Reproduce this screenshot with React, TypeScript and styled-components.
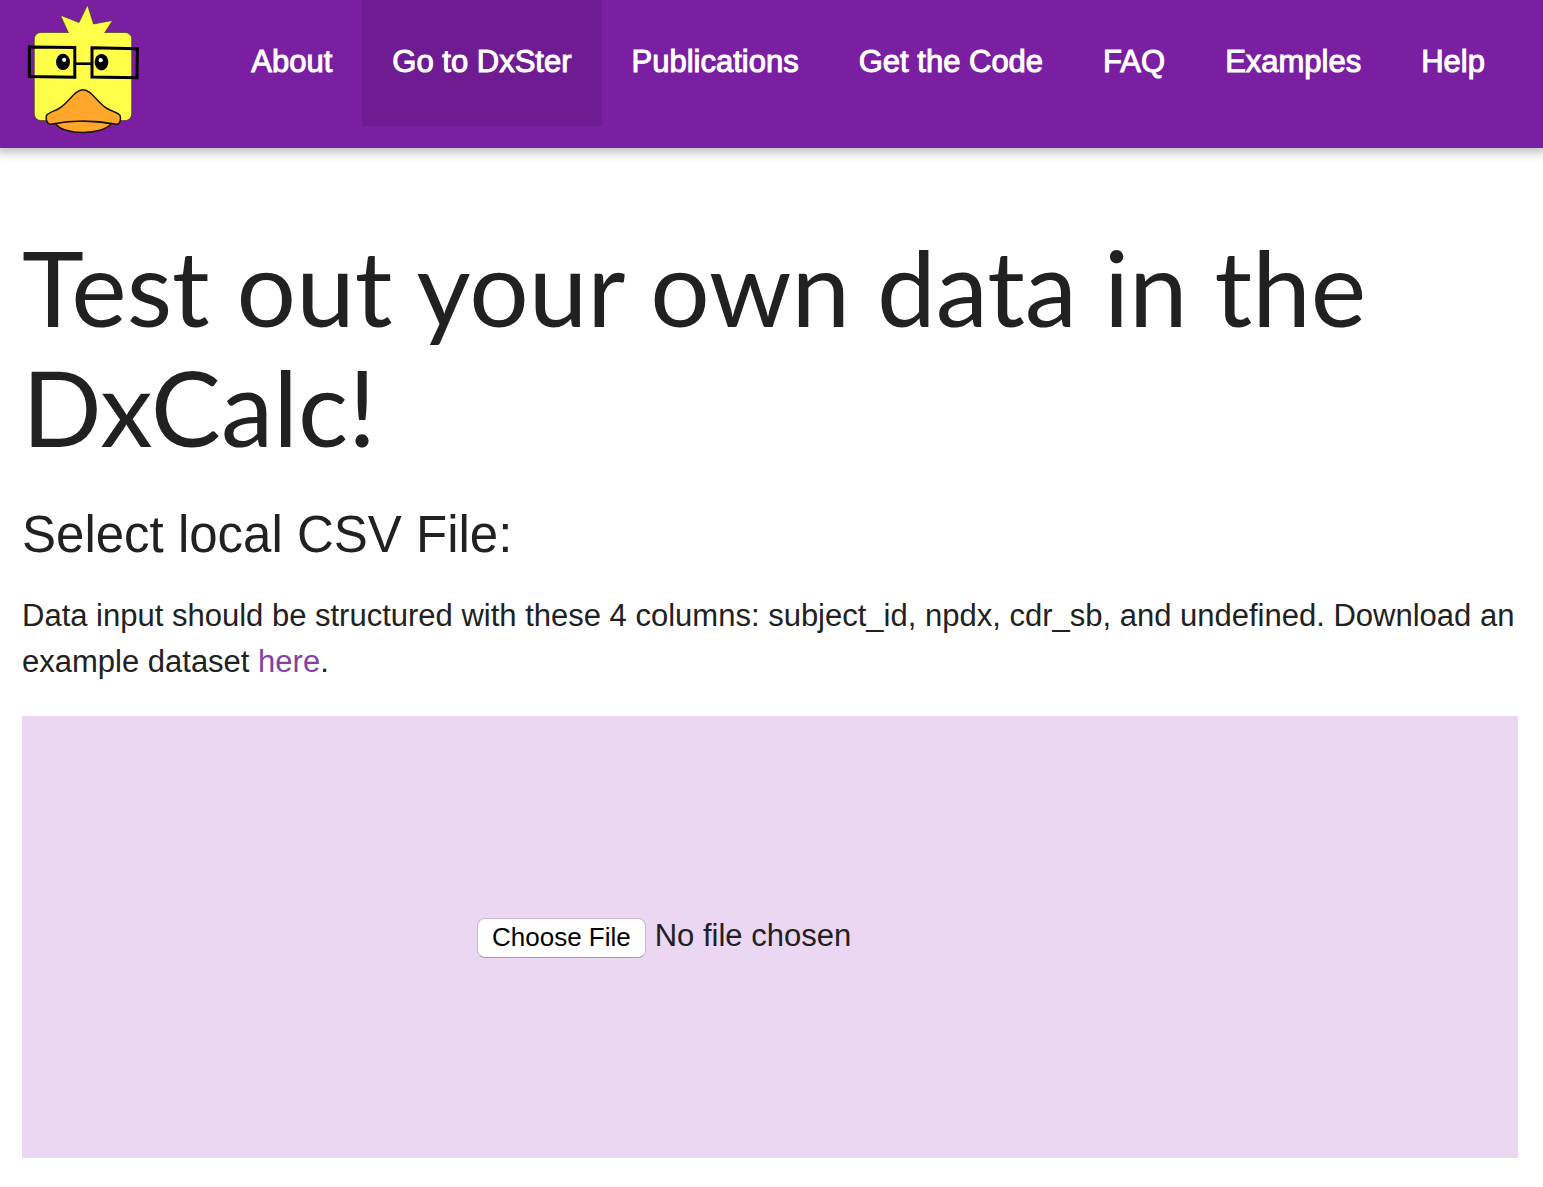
import React from "react";
import styled, { createGlobalStyle } from "styled-components";

const GlobalStyle = createGlobalStyle`
  * { box-sizing: border-box; }
  body {
    margin: 0;
    background: #fff;
    color: #212121;
    font-family: "Liberation Sans", Arial, sans-serif;
    font-size: 31px;
    line-height: 46px;
  }
`;

const Header = styled.header`
  display: flex;
  align-items: flex-start;
  justify-content: space-between;
  height: 148px;
  padding: 0 28px 0 24px;
  background: #7b1fa2;
  box-shadow: 0 0 10px 4px rgba(0, 0, 0, 0.28);
`;

const HomeLink = styled.a`
  display: block;
  flex: none;
`;

const Logo = styled.svg`
  display: block;
  width: 120px;
  height: 136px;
`;

const Nav = styled.nav`
  display: flex;
`;

const NavLink = styled.a<{ $active?: boolean }>`
  padding: 0 30px;
  line-height: 124px;
  height: 126px;
  white-space: nowrap;
  color: #fff;
  text-decoration: none;
  -webkit-text-stroke: 1px #fff;
  background: ${(p) => (p.$active ? "#6f1c92" : "transparent")};
`;

const Main = styled.main`
  padding: 78px 25px 28px 22px;
`;

const Title = styled.h1`
  margin: 0 0 41px;
  font-family: Lato, sans-serif;
  font-size: 105px;
  font-weight: 400;
  line-height: 120px;
`;

const Subtitle = styled.h2`
  margin: 0 0 30px;
  font-size: 51px;
  font-weight: 400;
  line-height: 56px;
`;

const Text = styled.p`
  margin: 0 0 31px;
`;

const TextLink = styled.a`
  color: #8540a0;
  text-decoration: none;
`;

const DropZone = styled.label`
  display: flex;
  align-items: center;
  justify-content: center;
  min-height: 442px;
  padding-bottom: 2px;
  background: #ebd7f2;
`;

const FileInput = styled.input`
  width: 586px;
  max-width: 100%;
  font: inherit;
  color: inherit;

  &::file-selector-button {
    height: 40px;
    margin: 0 9px 0 0;
    padding: 0 14px;
    border: 1px solid #cbb9d1;
    border-bottom-color: #a898ae;
    border-radius: 8px;
    background: #fff;
    color: #000;
    font-family: "Liberation Sans", Arial, sans-serif;
    font-size: 26px;
    -webkit-text-stroke: 0;
  }
`;

const links = ["About", "Go to DxSter", "Publications", "Get the Code", "FAQ", "Examples", "Help"];

function DuckLogo() {
  return (
    <Logo viewBox="24 0 120 136" aria-hidden="true">
      <g stroke="#33301a" strokeWidth="0.6">
        <rect x="34.3" y="32.5" width="97.4" height="88" rx="6.5" fill="#ffff4a" />
        <path d="M68.5 33 L60.5 15.3 L79 22.6 L87.5 5 L93.5 24 L112.5 20.5 L104.5 33" fill="#ffff4a" />
      </g>
      <ellipse cx="63" cy="62" rx="7" ry="8.3" fill="#000" />
      <ellipse cx="101.5" cy="62.2" rx="6.8" ry="8.3" fill="#000" />
      <circle cx="64.2" cy="59.8" r="2.1" fill="#fff" />
      <circle cx="100.7" cy="60.2" r="2.1" fill="#fff" />
      <g fill="none" stroke="#000" strokeWidth="3">
        <path d="M29.3 46.9 L74.8 47.6 V77.2 L29.3 76.6 Z" />
        <path d="M92 47.8 L137.4 48.7 L137 77.8 L92 77 Z" />
        <path d="M75 63.7 H92" strokeWidth="2.6" />
      </g>
      <g fill="#ffa62b" stroke="#1c1405" strokeWidth="1.5" strokeLinejoin="round">
        <path d="M55.5 123.5 C63 135.5 103 135.5 111 123.7 C95 120.3 71 120.3 55.5 123.5 Z" />
        <path d="M83 89.8 C92 89.8 97 103 107 108.5 C112 111.4 118 112.3 120 115.5 C121.5 119 120 124.2 116.5 124.2 C105 122 95 121 83 121 C71 121 62 122 50.5 124.2 C46.5 123.5 45.5 118.5 46.5 115.5 C48.5 112.3 54 111.4 59 108.5 C69 103 74 89.8 83 89.8 Z" />
      </g>
    </Logo>
  );
}

export default function App() {
  return (
    <>
      <GlobalStyle />
      <Header>
        <HomeLink href="#home" aria-label="Home">
          <DuckLogo />
        </HomeLink>
        <Nav>
          {links.map((name) => (
            <NavLink key={name} href="#" $active={name === "Go to DxSter"}>
              {name}
            </NavLink>
          ))}
        </Nav>
      </Header>
      <Main>
        <Title>Test out your own data in the DxCalc!</Title>
        <Subtitle id="file-heading">Select local CSV File:</Subtitle>
        <Text>
          Data input should be structured with these 4 columns: subject_id, npdx, cdr_sb, and undefined. Download an
          example dataset <TextLink href="#example">here</TextLink>.
        </Text>
        <DropZone htmlFor="csv-file">
          <FileInput id="csv-file" type="file" accept=".csv" aria-labelledby="file-heading" />
        </DropZone>
      </Main>
    </>
  );
}
